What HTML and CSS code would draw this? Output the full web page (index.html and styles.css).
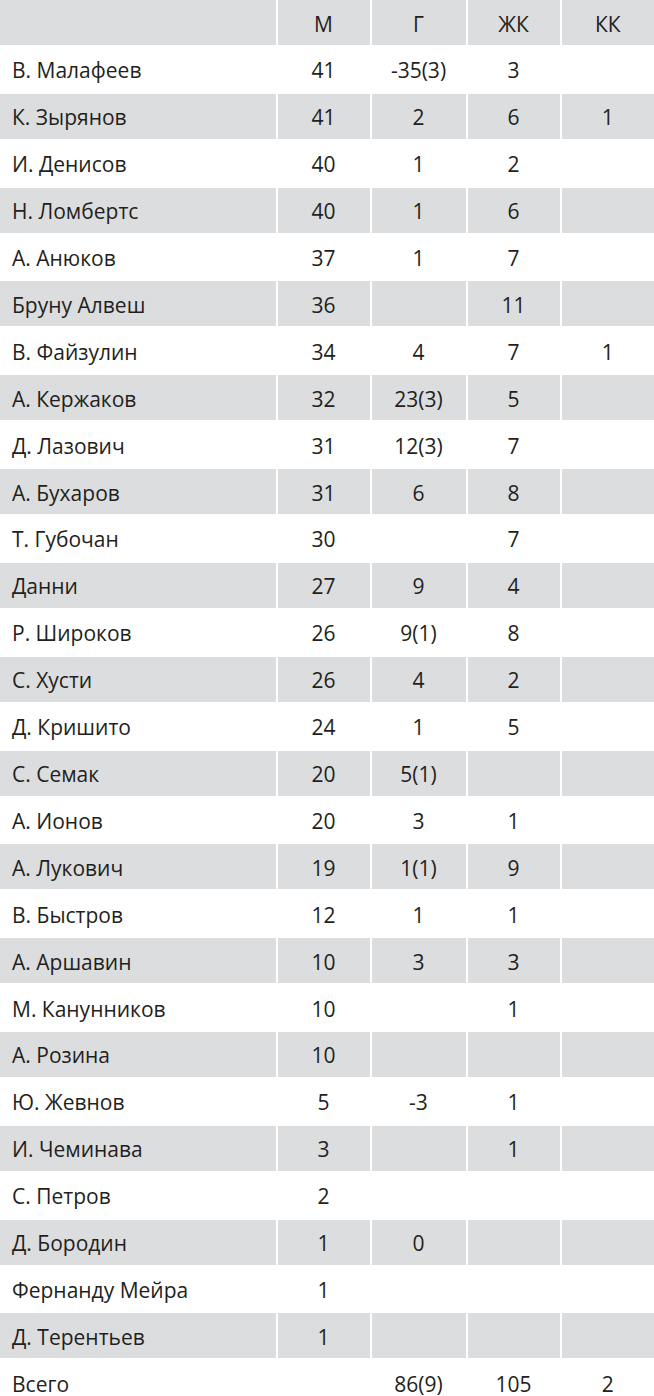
FILE: index.html
```html
<!DOCTYPE html>
<html lang="ru">
<head>
<meta charset="utf-8">
<link rel="stylesheet" href="styles.css">
</head>
<body>
<div class="table">
  <div class="row head"><div class="c name"></div><div class="c">М</div><div class="c">Г</div><div class="c">ЖК</div><div class="c">КК</div></div>
  <div class="row"><div class="c name">В. Малафеев</div><div class="c">41</div><div class="c">-35(3)</div><div class="c">3</div><div class="c"></div></div>
  <div class="row alt"><div class="c name">К. Зырянов</div><div class="c">41</div><div class="c">2</div><div class="c">6</div><div class="c">1</div></div>
  <div class="row"><div class="c name">И. Денисов</div><div class="c">40</div><div class="c">1</div><div class="c">2</div><div class="c"></div></div>
  <div class="row alt"><div class="c name">Н. Ломбертс</div><div class="c">40</div><div class="c">1</div><div class="c">6</div><div class="c"></div></div>
  <div class="row"><div class="c name">А. Анюков</div><div class="c">37</div><div class="c">1</div><div class="c">7</div><div class="c"></div></div>
  <div class="row alt"><div class="c name">Бруну Алвеш</div><div class="c">36</div><div class="c"></div><div class="c">11</div><div class="c"></div></div>
  <div class="row"><div class="c name">В. Файзулин</div><div class="c">34</div><div class="c">4</div><div class="c">7</div><div class="c">1</div></div>
  <div class="row alt"><div class="c name">А. Кержаков</div><div class="c">32</div><div class="c">23(3)</div><div class="c">5</div><div class="c"></div></div>
  <div class="row"><div class="c name">Д. Лазович</div><div class="c">31</div><div class="c">12(3)</div><div class="c">7</div><div class="c"></div></div>
  <div class="row alt"><div class="c name">А. Бухаров</div><div class="c">31</div><div class="c">6</div><div class="c">8</div><div class="c"></div></div>
  <div class="row"><div class="c name">Т. Губочан</div><div class="c">30</div><div class="c"></div><div class="c">7</div><div class="c"></div></div>
  <div class="row alt"><div class="c name">Данни</div><div class="c">27</div><div class="c">9</div><div class="c">4</div><div class="c"></div></div>
  <div class="row"><div class="c name">Р. Широков</div><div class="c">26</div><div class="c">9(1)</div><div class="c">8</div><div class="c"></div></div>
  <div class="row alt"><div class="c name">С. Хусти</div><div class="c">26</div><div class="c">4</div><div class="c">2</div><div class="c"></div></div>
  <div class="row"><div class="c name">Д. Кришито</div><div class="c">24</div><div class="c">1</div><div class="c">5</div><div class="c"></div></div>
  <div class="row alt"><div class="c name">С. Семак</div><div class="c">20</div><div class="c">5(1)</div><div class="c"></div><div class="c"></div></div>
  <div class="row"><div class="c name">А. Ионов</div><div class="c">20</div><div class="c">3</div><div class="c">1</div><div class="c"></div></div>
  <div class="row alt"><div class="c name">А. Лукович</div><div class="c">19</div><div class="c">1(1)</div><div class="c">9</div><div class="c"></div></div>
  <div class="row"><div class="c name">В. Быстров</div><div class="c">12</div><div class="c">1</div><div class="c">1</div><div class="c"></div></div>
  <div class="row alt"><div class="c name">А. Аршавин</div><div class="c">10</div><div class="c">3</div><div class="c">3</div><div class="c"></div></div>
  <div class="row"><div class="c name">М. Канунников</div><div class="c">10</div><div class="c"></div><div class="c">1</div><div class="c"></div></div>
  <div class="row alt"><div class="c name">А. Розина</div><div class="c">10</div><div class="c"></div><div class="c"></div><div class="c"></div></div>
  <div class="row"><div class="c name">Ю. Жевнов</div><div class="c">5</div><div class="c">-3</div><div class="c">1</div><div class="c"></div></div>
  <div class="row alt"><div class="c name">И. Чеминава</div><div class="c">3</div><div class="c"></div><div class="c">1</div><div class="c"></div></div>
  <div class="row"><div class="c name">С. Петров</div><div class="c">2</div><div class="c"></div><div class="c"></div><div class="c"></div></div>
  <div class="row alt"><div class="c name">Д. Бородин</div><div class="c">1</div><div class="c">0</div><div class="c"></div><div class="c"></div></div>
  <div class="row"><div class="c name">Фернанду Мейра</div><div class="c">1</div><div class="c"></div><div class="c"></div><div class="c"></div></div>
  <div class="row alt"><div class="c name">Д. Терентьев</div><div class="c">1</div><div class="c"></div><div class="c"></div><div class="c"></div></div>
  <div class="row"><div class="c name">Всего</div><div class="c"></div><div class="c">86(9)</div><div class="c">105</div><div class="c">2</div></div>
</div>
</body>
</html>
```
FILE: styles.css
```css
html, body {
  margin: 0;
  padding: 0;
  background: #ffffff;
}
body {
  font-family: "Open Sans", "Noto Sans", sans-serif;
  font-size: 21px;
  color: #231f20;
}
.table {
  width: 654px;
  display: flex;
  flex-direction: column;
  gap: 1.92px;
}
.row {
  display: grid;
  grid-template-columns: 275.5px 92px 94px 92px 92.5px;
  column-gap: 2px;
  height: 45px;
}
.c {
  display: flex;
  align-items: center;
  justify-content: center;
  padding-top: 2px;
  box-sizing: border-box;
}
.c.name {
  justify-content: flex-start;
  padding-left: 12px;
}
.head .c, .alt .c {
  background: #dcdddf;
}
```
